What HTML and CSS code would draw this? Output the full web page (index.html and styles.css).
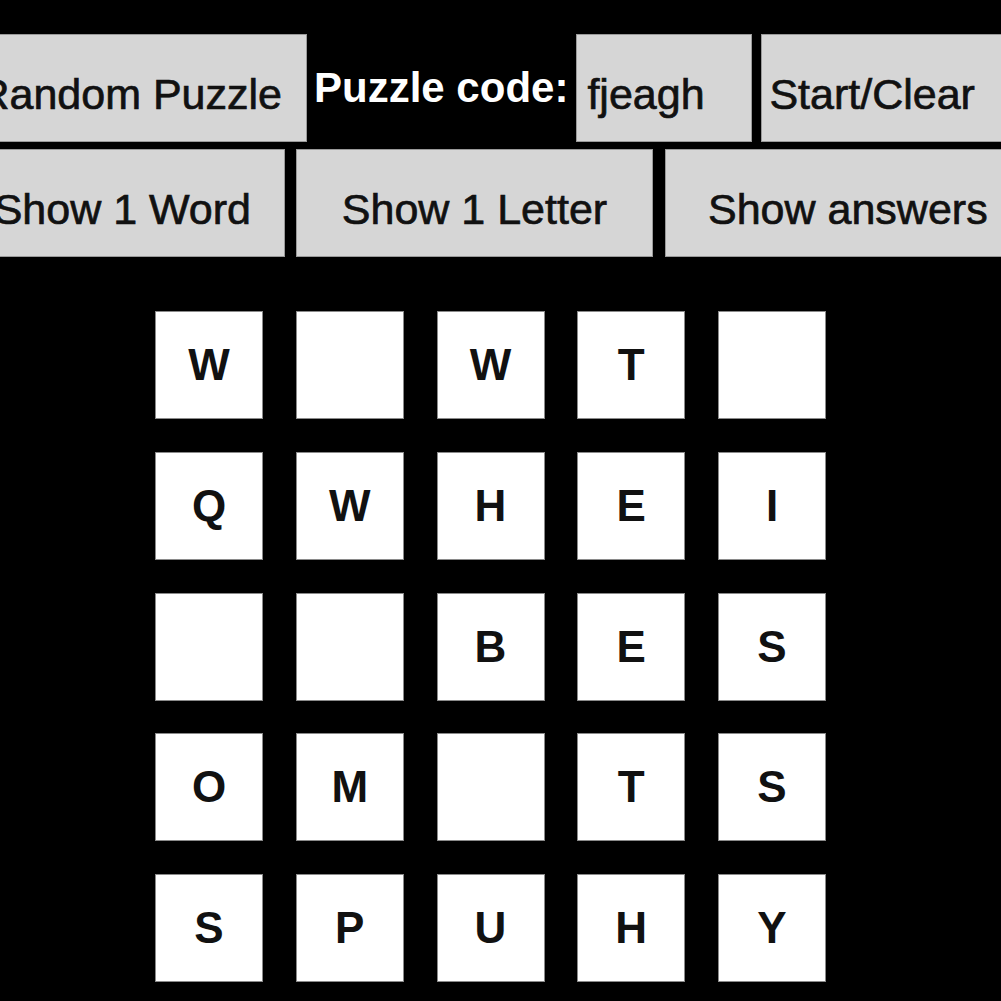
FILE: index.html
```html
<!DOCTYPE html>
<html lang="en">
<head>
  <meta charset="UTF-8" />
  <meta name="viewport" content="width=device-width, initial-scale=1.0"/>
  <title>Word Square</title>
  <link rel="stylesheet" href="styles.css">
</head>
<body>

  <!-- Top controls -->
  <div class="controls">
    <div class="row row-top">
      <button class="btn btn-random">Random Puzzle</button>
      <label class="code-label" for="code">Puzzle code:</label>
      <input class="code-input" id="code" type="text" value="fjeagh">
      <button class="btn btn-start">Start/Clear</button>
    </div>
    <div class="row row-hints">
      <button class="btn btn-word">Show 1 Word</button>
      <button class="btn btn-letter">Show 1 Letter</button>
      <button class="btn btn-answers">Show answers</button>
    </div>
  </div>

  <!-- Puzzle grid -->
  <div class="board">
    <div class="tile">W</div>
    <div class="tile"></div>
    <div class="tile">W</div>
    <div class="tile">T</div>
    <div class="tile"></div>

    <div class="tile">Q</div>
    <div class="tile">W</div>
    <div class="tile">H</div>
    <div class="tile">E</div>
    <div class="tile">I</div>

    <div class="tile"></div>
    <div class="tile"></div>
    <div class="tile">B</div>
    <div class="tile">E</div>
    <div class="tile">S</div>

    <div class="tile">O</div>
    <div class="tile">M</div>
    <div class="tile"></div>
    <div class="tile">T</div>
    <div class="tile">S</div>

    <div class="tile">S</div>
    <div class="tile">P</div>
    <div class="tile">U</div>
    <div class="tile">H</div>
    <div class="tile">Y</div>
  </div>

</body>
</html>
```

FILE: styles.css
```css
/* Base styles */
* {
  margin: 0;
  padding: 0;
  box-sizing: border-box;
}

html,
body {
  background-color: #000;
}

body {
  font-family: 'Liberation Sans', Arial, Helvetica, sans-serif;
  color: #111;
  overflow: hidden;
  height: 100vh;
}

/* Controls */
.controls {
  padding-top: 34px;
  margin-left: -40px;
  width: 1200px;
}

.row {
  display: flex;
  align-items: center;
  height: 108px;
}

.row > * {
  flex-shrink: 0;
}

.row-hints {
  margin-top: 7px;
}

.btn,
.code-input {
  height: 108px;
  background-color: #d6d6d6;
  border: 1px solid #9a9a9a;
  font-family: inherit;
  font-size: 43px;
  color: #111;
  -webkit-text-stroke: 0.7px #111;
  padding-top: 12px;
  white-space: nowrap;
  cursor: pointer;
}

.btn-random {
  width: 347px;
  text-align: right;
  padding-right: 24px;
}

.code-label {
  color: #fff;
  font-weight: bold;
  font-size: 42px;
  margin: 0 8px 0 7px;
  white-space: nowrap;
}

.code-input {
  width: 176px;
  padding-left: 10px;
  outline: none;
  cursor: text;
}

.btn-start {
  width: 300px;
  margin-left: 9px;
  text-align: left;
  padding-left: 7px;
}

.btn-word {
  width: 325px;
  text-align: right;
  padding-right: 33px;
}

.btn-letter {
  width: 357px;
  margin-left: 11px;
}

.btn-answers {
  width: 380px;
  margin-left: 12px;
  text-align: left;
  padding-left: 42px;
}

/* Puzzle grid */
.board {
  display: grid;
  grid-template-columns: repeat(5, 108px);
  grid-auto-rows: 108px;
  gap: 32.75px;
  margin: 54px 0 0 155px;
}

.tile {
  display: flex;
  align-items: center;
  justify-content: center;
  background-color: #fff;
  border: 1px solid #8a8a8a;
  font-size: 44px;
  font-weight: bold;
  color: #111;
}
```
